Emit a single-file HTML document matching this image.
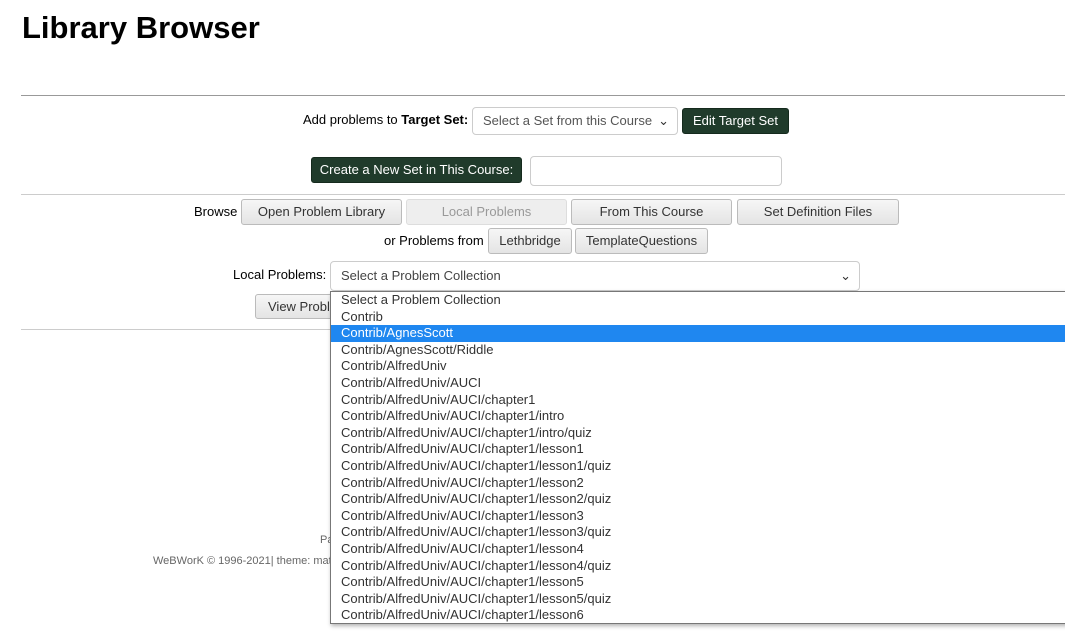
<!DOCTYPE html>
<html><head><meta charset="utf-8"><style>
body{margin:0;width:1065px;height:640px;overflow:hidden;background:#fff;font-family:"Liberation Sans",Arial,sans-serif;font-size:13px;color:#222;position:relative}
.a{position:absolute}
h1{position:absolute;left:22px;top:10px;margin:0;font-size:31px;font-weight:bold;color:#000}
.hr{position:absolute;left:21px;right:0;height:1px;background:#ccc}
.btn{position:absolute;box-sizing:border-box;border:1px solid #bbb;border-radius:3px;background:linear-gradient(#f6f6f6,#e4e4e4);text-align:center;font-size:13px;color:#333}
.g{background:#203b2b;border-color:#152a1d;color:#fff}
.sel{position:absolute;box-sizing:border-box;border:1px solid #ccc;border-radius:4px;background:#fff;color:#555;padding-left:10px}
.dd{position:absolute;left:330px;top:291px;width:740px;height:333px;box-sizing:border-box;border:1px solid #777;background:#fff;box-shadow:1px 2px 4px rgba(0,0,0,.3)}
.dd div{height:16.6px;line-height:16.6px;padding-left:10px;font-size:13px;color:#333}
.dd .h{background:#1f87f0;color:#fff}
</style></head><body>
<h1>Library Browser</h1>
<div class="hr" style="top:95px;background:#999"></div>
<div class="a" style="left:303px;top:112px;color:#000">Add problems to <b>Target Set:</b></div>
<div class="sel" style="left:472px;top:107px;width:206px;height:28px;line-height:26px">Select a Set from this Course<span style="position:absolute;right:8px;color:#333">&#8964;</span></div>
<div class="btn g" style="left:682px;top:108px;width:107px;height:26px;line-height:24px">Edit Target Set</div>
<div class="btn g" style="left:311px;top:157px;width:211px;height:26px;line-height:24px">Create a New Set in This Course:</div>
<div class="sel" style="left:530px;top:156px;width:252px;height:30px"></div>
<div class="hr" style="top:194px"></div>
<div class="a" style="left:194px;top:204px;color:#000">Browse</div>
<div class="btn" style="left:241px;top:199px;width:161px;height:26px;line-height:24px">Open Problem Library</div>
<div class="btn" style="left:406px;top:199px;width:161px;height:26px;line-height:24px;color:#999;background:#eee;border-color:#ddd">Local Problems</div>
<div class="btn" style="left:571px;top:199px;width:161px;height:26px;line-height:24px">From This Course</div>
<div class="btn" style="left:737px;top:199px;width:162px;height:26px;line-height:24px">Set Definition Files</div>
<div class="a" style="left:384px;top:233px;color:#000">or Problems from</div>
<div class="btn" style="left:488px;top:228px;width:84px;height:26px;line-height:24px">Lethbridge</div>
<div class="btn" style="left:575px;top:228px;width:133px;height:26px;line-height:24px">TemplateQuestions</div>
<div class="a" style="left:233px;top:267px;color:#000">Local Problems:</div>
<div class="sel" style="left:330px;top:261px;width:530px;height:30px;line-height:28px;color:#444">Select a Problem Collection<span style="position:absolute;right:8px;color:#333">&#8964;</span></div>
<div class="btn" style="left:255px;top:294px;width:110px;height:25px;line-height:23px;text-align:left;padding-left:12px">View Problems</div>
<div class="hr" style="top:329px"></div>
<div class="a" style="left:320px;top:534px;font-size:11px;color:#666">Page generated</div>
<div class="a" style="left:153px;top:555px;font-size:11px;color:#666">WeBWorK © 1996-2021| theme: math4</div>
<div class="dd">
<div>Select a Problem Collection</div><div>Contrib</div><div class="h">Contrib/AgnesScott</div><div>Contrib/AgnesScott/Riddle</div><div>Contrib/AlfredUniv</div><div>Contrib/AlfredUniv/AUCI</div><div>Contrib/AlfredUniv/AUCI/chapter1</div><div>Contrib/AlfredUniv/AUCI/chapter1/intro</div><div>Contrib/AlfredUniv/AUCI/chapter1/intro/quiz</div><div>Contrib/AlfredUniv/AUCI/chapter1/lesson1</div><div>Contrib/AlfredUniv/AUCI/chapter1/lesson1/quiz</div><div>Contrib/AlfredUniv/AUCI/chapter1/lesson2</div><div>Contrib/AlfredUniv/AUCI/chapter1/lesson2/quiz</div><div>Contrib/AlfredUniv/AUCI/chapter1/lesson3</div><div>Contrib/AlfredUniv/AUCI/chapter1/lesson3/quiz</div><div>Contrib/AlfredUniv/AUCI/chapter1/lesson4</div><div>Contrib/AlfredUniv/AUCI/chapter1/lesson4/quiz</div><div>Contrib/AlfredUniv/AUCI/chapter1/lesson5</div><div>Contrib/AlfredUniv/AUCI/chapter1/lesson5/quiz</div><div>Contrib/AlfredUniv/AUCI/chapter1/lesson6</div>
</div>
</body></html>
